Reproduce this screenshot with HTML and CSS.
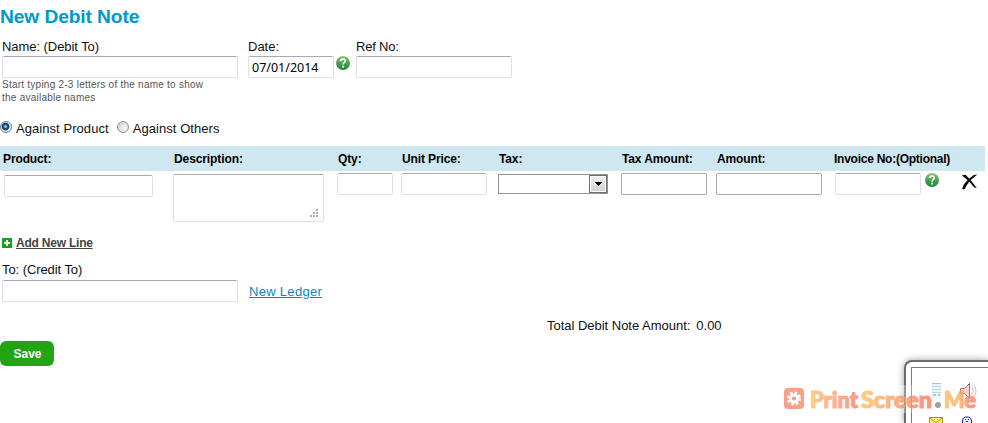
FILE: index.html
```html
<!DOCTYPE html>
<html lang="en">
<head>
<meta charset="utf-8">
<title>New Debit Note</title>
<link rel="stylesheet" href="styles.css">
</head>
<body>
<svg class="defs" width="0" height="0" aria-hidden="true">
  <defs>
    <linearGradient id="green" x1="0" y1="0" x2="0" y2="1"><stop offset="0" stop-color="#8bc978"/><stop offset=".5" stop-color="#4ba34d"/><stop offset="1" stop-color="#16843b"/></linearGradient>
    <linearGradient id="wm1"><stop offset="0" stop-color="#fbc47c"/><stop offset=".5" stop-color="#f8a87d"/><stop offset="1" stop-color="#f9857a"/></linearGradient>
    <linearGradient id="wm2"><stop offset="0" stop-color="#fcc66e"/><stop offset="1" stop-color="#f8806c"/></linearGradient>
    <linearGradient id="wm3"><stop offset=".4" stop-color="#fabc6c"/><stop offset=".8" stop-color="#fa8874"/></linearGradient>
    <symbol id="help" viewBox="0 0 14 14"><circle cx="7" cy="7" r="7" fill="url(#green)"/><path d="M4.7 5.1C4.9 2.3 9.5 2.5 9.2 5.1C9 6.7 7.1 6.5 7.1 8.4" fill="none" stroke="#fff" stroke-width="1.7"/><circle cx="7.1" cy="10.7" r="1.1" fill="#fff"/></symbol>
  </defs>
</svg>
<main class="page">
  <h1 class="title">New Debit Note</h1>
  <form class="form">
    <div class="fields">
      <div class="field name">
        <label for="name" class="label l-name">Name: (Debit To)</label>
        <input id="name" class="input">
        <p class="hint">Start typing 2-3 letters of the name to show<br>the available names</p>
      </div>
      <div class="field date">
        <label for="date" class="label">Date:</label>
        <input id="date" class="input" value="07/01/2014">
      </div>
      <svg class="help help-date"><use href="#help"/></svg>
      <div class="field ref">
        <label for="ref" class="label l-ref">Ref No:</label>
        <input id="ref" class="input">
      </div>
    </div>
    <div class="radios">
      <span class="radio on"></span><span>Against Product</span>
      <span class="radio second"></span><span>Against Others</span>
    </div>
    <div class="grid head">
      <span>Product:</span><span>Description:</span><span>Qty:</span><span>Unit Price:</span><span>Tax:</span><span>Tax Amount:</span><span>Amount:</span><span class="h-invoice">Invoice No:(Optional)</span>
    </div>
    <div class="grid row">
      <input class="input product" aria-label="Product">
      <div class="area">
        <textarea class="input description" aria-label="Description"></textarea>
        <svg class="grip" width="8" height="8"><path fill="#aaa" d="M6 0h2v2H6zM3 3h2v2H3zM6 3h2v2H6zM0 6h2v2H0zM3 6h2v2H3zM6 6h2v2H6z"/></svg>
      </div>
      <input class="input qty" aria-label="Quantity">
      <input class="input price" aria-label="Unit price">
      <div class="select" role="combobox" aria-label="Tax"><span class="drop"><svg width="7" height="4"><path d="M0 0h7v1H6v1H5v1H4v1H3V3H2V2H1V1H0z"/></svg></span></div>
      <input class="input dark tax-amount" aria-label="Tax amount">
      <input class="input dark amount" aria-label="Amount">
      <div class="invoice">
        <input class="input" aria-label="Invoice number">
        <svg class="help"><use href="#help"/></svg>
        <svg class="delete" width="16" height="16" viewBox="0 0 16 16"><path d="M0 1.5Q1.6.2 3.8.9Q9 6 14.8 14L12.2 13.5Q7 6.3 0 1.5z"/><path d="M15.4.5Q9.5 4.8 6.8 8.5Q4 12 3.2 14.6Q1.6 16 .4 15Q.2 11.5 4.6 7.3Q8.5 3.2 11.8 1z"/></svg>
      </div>
    </div>
    <a class="add"><svg width="10" height="10"><path fill="#15a31f" d="M0 0h10v10H0z"/><path fill="#fff" d="M4 2h2v2h2v2H6v2H4V6H2V4h2z"/></svg><span>Add New Line</span></a>
    <div class="credit">
      <label for="credit" class="label l-credit">To: (Credit To)</label>
      <div class="credit-row"><input id="credit" class="input"><a class="ledger">New Ledger</a></div>
    </div>
    <div class="total"><span>Total Debit Note Amount:</span><span>0.00</span></div>
    <button class="save" type="button">Save</button>
  </form>
</main>
<aside class="dock">
  <div class="dock-inner">
    <svg width="76" height="55" viewBox="912 368 76 55">
      <path d="M931.5 383.5h10v15h-10z" fill="#e5f2f7"/><path d="M932 383.5h9M932 386.5h9M932 389.5h9M932 392.5h9" stroke="#a8c4d0"/><path d="M933 395h3M938 395h2" stroke="#57ba79" stroke-width="1.5"/>
      <path d="M960.5 388.5h4l5-5v15l-5-5h-4z" fill="#eebcae" stroke="#7a4c43"/><path d="M972 387q3 4 0 8M974 385q4 6 0 12" fill="none" stroke="#b9a5a0"/>
      <path d="M929.5 417.5h13v9h-13z" fill="#ffe879" stroke="#a59537"/><path d="M930 418l6 5 6-5" fill="none" stroke="#a59537"/>
      <path d="M962.5 424v-4l1-2 2-1h3l2 1 1 2v4" fill="#eeeefe" stroke="#28289a"/><path d="M965 419.5h1M968 419.5h1M966 422l1-1 1 1" fill="none" stroke="#28289a"/>
    </svg>
  </div>
</aside>
<svg class="watermark" width="205" height="43" viewBox="783 380 205 43">
  <path d="M783 385h205v28H783z" fill="#fff" opacity=".35"/>
  <rect x="784" y="388" width="20" height="21" rx="4" fill="#f99074"/>
  <circle cx="794" cy="398.5" r="5.8" fill="none" stroke="#fff" stroke-width="2.6" stroke-dasharray="2.5 2.05"/><circle cx="794" cy="398.5" r="5" fill="#fff"/><circle cx="794" cy="398.5" r="2.1" fill="#e08a80"/>
  <g class="wm-text">
    <text x="810" y="408" textLength="48" lengthAdjust="spacingAndGlyphs" fill="url(#wm1)" stroke="url(#wm1)">Print</text>
    <text x="861" y="408" textLength="71" lengthAdjust="spacingAndGlyphs" fill="url(#wm2)" stroke="url(#wm2)">Screen</text>
    <circle cx="938" cy="405" r="3" fill="#8e8b8b"/>
    <text x="944" y="408" textLength="32" lengthAdjust="spacingAndGlyphs" fill="url(#wm3)" stroke="url(#wm3)">Me</text>
  </g>
</svg>
</body>
</html>
```

FILE: styles.css
```css
* { box-sizing: border-box; }
body { margin: 0; width: 988px; height: 423px; overflow: hidden; position: relative; background: #fff; color: #111; font: 13px/16px "Liberation Sans", Arial, sans-serif; }
svg { display: block; flex: none; }
span, label { white-space: nowrap; }
.defs { position: absolute; }
.page { height: 423px; padding-top: 5px; }
.title { margin: 0; height: 34px; font-size: 19.2px; line-height: 23px; letter-spacing: -.1px; color: #0099cb; }
.form { margin: 0; }
.fields { display: flex; height: 81px; padding-left: 2px; }
.label { display: block; height: 17px; }
.l-name { letter-spacing: -.06px; }
.l-ref { letter-spacing: -.2px; }
.input { display: block; width: 100%; height: 22px; margin: 0; padding: 0 3px; border: 1px solid #dfdfe8; border-top-color: #a9a9b2; border-radius: 2px; background: #fff; color: #000; outline: none; font: 12.5px "Noto Sans", sans-serif; letter-spacing: 0; }
.dark { border-color: #a9a9ad; }
.name { width: 236px; margin-right: 10px; }
.date { width: 86px; }
.ref { width: 156px; }
.help { width: 14px; height: 14px; }
.help-date { margin: 17px 6px 0 2px; }
.hint { margin: 0; font-size: 10px; line-height: 13px; letter-spacing: .24px; color: #555; }
.radios { display: flex; align-items: center; height: 16px; padding-top: 1px; line-height: 17px; letter-spacing: .06px; }
.radio { width: 12px; height: 12px; margin: -4px 4px 0 0; border: 1px solid #929292; border-radius: 50%; background: radial-gradient(circle at 65% 65%, #f7f7f7, #c9c9c9); }
.on { border-color: #648097; background: radial-gradient(circle at 45% 45%, #5cc7ed 0 1px, #155b85 2px, #123650 3.3px, #e7eef3 4.3px); }
.second { margin-left: 8px; }
.grid { display: grid; grid-template-columns: 170px 164px 64px 97px 123px 95px 118px 154px; width: 985px; }
.head { height: 25px; margin-top: 10px; padding: 1px 0 0 3px; background: #cfe7f0; font-size: 12px; line-height: 25px; font-weight: bold; color: #000; letter-spacing: -.12px; }
.head span:nth-child(2) { padding-left: 1px; letter-spacing: -.1px; }
.head span:nth-child(n+3) { padding-left: 1px; }
.head .h-invoice { letter-spacing: -.25px; margin-left: -1px; }
.row { height: 61px; padding: 2px 0 0 3px; align-items: start; }
.product { width: 149px; margin: 2px 0 0 1px; }
.area { position: relative; width: 151px; }
.description { height: 48px; margin-top: 1px; resize: none; }
.grip { position: absolute; right: 6px; bottom: 5px; }
.qty { width: 56px; }
.price { width: 86px; }
.select { display: flex; justify-content: flex-end; width: 110px; height: 20px; margin-top: 1px; border: 1px solid #949494; }
.drop { display: grid; place-items: center; width: 18px; height: 18px; border: 1px solid #707070; background: linear-gradient(#f4f4f4, #cfcfcf); box-shadow: inset 0 0 0 1px #fff; }
.tax-amount { width: 86px; }
.amount { width: 106px; }
.invoice { display: flex; padding-left: 1px; }
.invoice .input { width: 86px; margin-right: 4px; }
.delete { margin: 1px 0 0 23px; fill: #120b0c; }
.add { display: flex; align-items: center; width: 100px; height: 22px; padding-left: 2px; gap: 4px; font-size: 12px; font-weight: bold; letter-spacing: -.22px; color: #444; text-decoration: underline; }
.add svg { margin-top: -1px; }
.credit { height: 51px; margin-top: 7px; padding-left: 2px; }
.l-credit { height: 19px; padding-top: 1px; letter-spacing: -.08px; }
.credit-row { display: flex; gap: 11px; }
.credit .input { width: 236px; }
.ledger { line-height: 24px; color: #078ac3; text-decoration: underline; letter-spacing: .3px; white-space: nowrap; }
.total { display: flex; gap: 6px; height: 29px; padding: 6px 0 0 547px; letter-spacing: -.02px; }
.save { display: block; width: 54px; height: 25px; padding: 0 0 0 1px; border: 0; border-radius: 6px; background: #23a413; color: #fff; font: bold 12px "Liberation Sans", Arial, sans-serif; }
.dock { position: absolute; left: 904px; top: 360px; width: 84px; height: 63px; padding: 5px 0 0 5px; border: solid #6b6b6b; border-width: 2px 0 0 2px; border-radius: 8px 0 0 0; background: #fff; box-shadow: 0 0 7px #999; }
.dock-inner { border: solid #777; border-width: 1px 0 0 1px; }
.watermark { position: absolute; left: 783px; top: 380px; opacity: .85; }
.wm-text { font: 900 22px Lato, sans-serif; stroke-width: 1.1px; }
```
